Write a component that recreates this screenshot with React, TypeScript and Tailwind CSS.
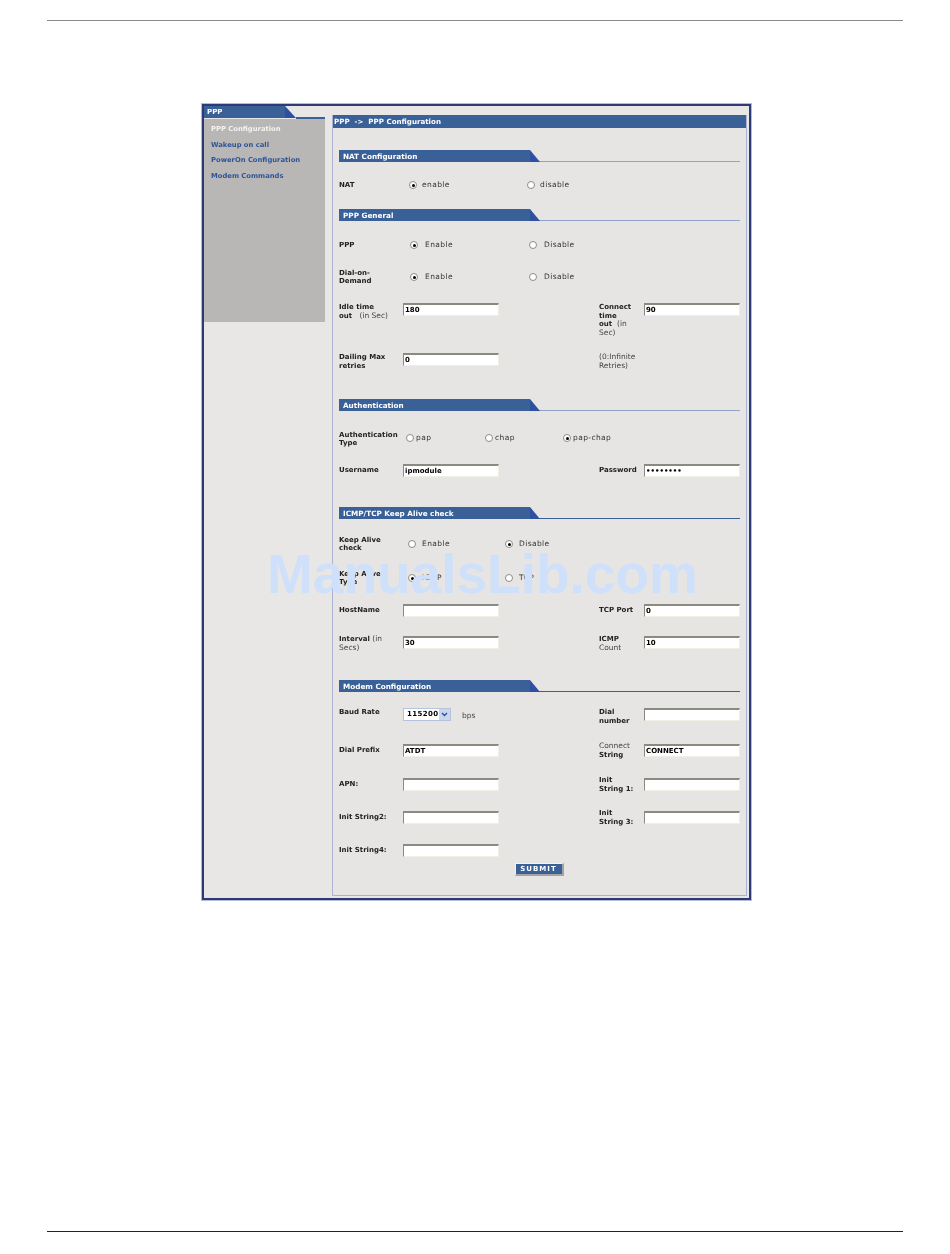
import React from "react";

const Sec = ({ t, mt, dark }: { t: string; mt: string; dark?: boolean }) => (
  <div className={`h-[13px] ${mt}`}>
    <div className={`flex items-start h-[12px] border-b ${dark ? "border-[#3a5f98]" : "border-[#8ea3cb]"}`}>
      <div className="h-[12px] w-[191px] bg-[#3a6098] text-white font-bold pl-[4px] leading-[13px] text-[7.25px]">{t}</div>
      <svg width="10" height="12" viewBox="0 0 10 12" className="block"><polygon points="0,0 0,12 10,12" fill="#2f4fa0" /></svg>
    </div>
  </div>
);

const Radio = ({ on }: { on?: boolean }) => (
  <span className="inline-flex w-[8px] h-[8px] rounded-full bg-white border border-[#8d8c88] items-center justify-center shrink-0">
    {on && <span className="w-[3px] h-[3px] rounded-full bg-black" />}
  </span>
);

const Opt = ({ label, on, gap }: { label: string; on?: boolean; gap: string }) => (
  <div className={`flex items-center ${gap} w-0 whitespace-nowrap`}>
    <Radio on={on} />
    <span className="text-[#333] tracking-[0.4px] text-[7.5px]">{label}</span>
  </div>
);

const Input = ({ v, w = "w-[96px]" }: { v?: string; w?: string }) => (
  <div className={`h-[13px] ${w} bg-white border-t-2 border-l border-[#8b8a80] border-b border-r border-b-[#f0efe6] border-r-[#f0efe6] pl-[1px] leading-[11px] text-black font-bold shrink-0`}>
    {v}
  </div>
);

const Lbl = ({ children, w = "w-[64px]" }: { children: React.ReactNode; w?: string }) => (
  <div className={`${w} shrink-0 leading-[8.5px] font-bold text-[#222]`}>{children}</div>
);
const Thin = ({ children }: { children: React.ReactNode }) => <span className="font-normal text-[#444] text-[7.5px]">{children}</span>;

const Row = ({ h, mt, l, a, rl, b, top }: { h: string; mt: string; l: React.ReactNode; a: React.ReactNode; rl?: React.ReactNode; b?: React.ReactNode; top?: boolean }) => (
  <div className={`flex ${top ? "items-start" : "items-center"} ${h} ${mt}`}>
    <Lbl>{l}</Lbl>
    <div className="w-[196px] shrink-0">{a}</div>
    {rl !== undefined && <Lbl w="w-[45px]">{rl}</Lbl>}
    {b}
  </div>
);

export default function App() {
  return (
    <div className="relative w-[950px] h-[1254px] bg-white overflow-hidden pt-[20px] pl-[47px] font-['DejaVu_Sans',sans-serif] text-[7px]">
      <div className="w-[856px] h-[1px] bg-[#8a8a8a]" />
      <div className="ml-[155px] mt-[83px] w-[549px] h-[796px] border-2 border-[#2c3a78] ring-1 ring-[#b4bad8] bg-[#e8e7e5] flex items-start blur-[0.25px]">
        <aside className="w-[121px] shrink-0">
          <div className="flex h-[13px]">
            <div className="w-[81px] h-[12px] bg-[#3a6098] text-white font-bold pl-[3px] leading-[12px]">PPP</div>
            <svg width="11" height="12" viewBox="0 0 11 12" className="block"><polygon points="0,0 0,12 11,12" fill="#2f4fa0" /></svg>
            <div className="flex-1 border-b-2 border-[#3a6098] h-[13px]" />
          </div>
          <nav className="h-[203px] bg-[#b8b7b5] pl-[7px] pt-[4px] font-bold flex flex-col text-[6.8px]">
            <a className="h-[15.5px] leading-[12px] text-[#f2f2f0]">PPP Configuration</a>
            <a className="h-[15.5px] leading-[12px] text-[#2f5596]">Wakeup on call</a>
            <a className="h-[15.5px] leading-[12px] text-[#2f5596]">PowerOn Configuration</a>
            <a className="h-[15.5px] leading-[12px] text-[#2f5596]">Modem Commands</a>
          </nav>
        </aside>
        <main className="ml-[7px] mt-[9px] w-[415px] h-[781px] border border-[#a9b4d2] border-t-0 bg-[#e6e5e3] flex flex-col">
          <div className="h-[13px] bg-[#3a6098] text-white font-bold pl-[1px] leading-[14px] text-[7.1px] shrink-0">PPP&nbsp; -&gt;&nbsp; PPP Configuration</div>
          <div className="pl-[6px] pr-[6px]">
            <Sec t="NAT Configuration" mt="mt-[22px]" />
            <div className="flex items-center h-[12px] mt-[16px]">
              <Lbl w="w-[70px]">NAT</Lbl>
              <div className="w-[118px] shrink-0"><Opt gap="gap-[5px]" label="enable" on /></div>
              <Opt gap="gap-[5px]" label="disable" />
            </div>
            <Sec t="PPP General" mt="mt-[18px]" />
            <div className="flex items-center h-[12px] mt-[17px]">
              <Lbl w="w-[71px]">PPP</Lbl>
              <div className="w-[119px] shrink-0"><Opt gap="gap-[7px]" label="Enable" on /></div>
              <Opt gap="gap-[7px]" label="Disable" />
            </div>
            <div className="flex items-center h-[18px] mt-[17px]">
              <Lbl w="w-[71px]">Dial-on-<br />Demand</Lbl>
              <div className="w-[119px] shrink-0"><Opt gap="gap-[7px]" label="Enable" on /></div>
              <Opt gap="gap-[7px]" label="Disable" />
            </div>
            <Row top h="h-[36px]" mt="mt-[17px]" l={<>Idle time<br />out &nbsp; <Thin>(in Sec)</Thin></>} a={<Input v="180" />} rl={<>Connect<br />time<br />out &nbsp;<Thin>(in</Thin><br /><Thin>Sec)</Thin></>} b={<Input v="90" />} />
            <Row top h="h-[20px]" mt="mt-[14px]" l={<>Dailing Max<br />retries</>} a={<Input v="0" />} rl={<span className="block w-[50px]"><Thin>(0:Infinite<br />Retries)</Thin></span>} />
            <Sec t="Authentication" mt="mt-[26px]" />
            <div className="flex items-center h-[18px] mt-[18px]">
              <Lbl w="w-[67px]">Authentication<br />Type</Lbl>
              <div className="w-[79px] shrink-0 -mt-[2px]"><Opt gap="gap-[2px]" label="pap" /></div>
              <div className="w-[78px] shrink-0 -mt-[2px]"><Opt gap="gap-[2px]" label="chap" /></div>
              <div className="-mt-[2px]"><Opt gap="gap-[2px]" label="pap-chap" on /></div>
            </div>
            <Row h="h-[13px]" mt="mt-[16px]" l="Username" a={<Input v="ipmodule" />} rl={<span className="whitespace-nowrap">Password</span>} b={<Input v="••••••••" />} />
            <Sec t="ICMP/TCP Keep Alive check" mt="mt-[30px]" dark />
            <div className="flex items-center h-[18px] mt-[15px]">
              <Lbl w="w-[69px]">Keep Alive<br />check</Lbl>
              <div className="w-[97px] shrink-0"><Opt gap="gap-[6px]" label="Enable" /></div>
              <Opt gap="gap-[6px]" label="Disable" on />
            </div>
            <div className="flex items-center h-[18px] mt-[16px]">
              <Lbl w="w-[69px]">Keep Alive<br />Type</Lbl>
              <div className="w-[97px] shrink-0"><Opt gap="gap-[6px]" label="ICMP" on /></div>
              <Opt gap="gap-[6px]" label="TCP" />
            </div>
            <Row h="h-[13px]" mt="mt-[17px]" l="HostName" a={<Input />} rl="TCP Port" b={<Input v="0" />} />
            <Row top h="h-[18px]" mt="mt-[19px]" l={<span className="block -mt-[1px]">Interval <Thin>(in</Thin><br /><Thin>Secs)</Thin></span>} a={<Input v="30" />} rl={<span className="block -mt-[1px]">ICMP<br /><Thin>Count</Thin></span>} b={<Input v="10" />} />
            <Sec t="Modem Configuration" mt="mt-[26px]" dark />
            <Row top h="h-[18px]" mt="mt-[15px]" l="Baud Rate" a={
              <div className="flex items-center">
                <div className="flex items-center w-[48px] h-[13px] bg-white border border-[#b5c3de] shrink-0">
                  <span className="font-bold pl-[3px] w-[35px] text-black leading-[11px] tracking-[0.4px]">115200</span>
                  <span className="w-[11px] h-[11px] bg-[#c9d6ee] flex items-center justify-center">
                    <svg width="7" height="5" viewBox="0 0 7 5"><path d="M1 1l2.5 2.5L6 1" fill="none" stroke="#2f4fa0" strokeWidth="1.4" /></svg>
                  </span>
                </div>
                <span className="ml-[11px] text-[#444] mt-[2px] text-[7.5px]">bps</span>
              </div>
            } rl={<>Dial<br />number</>} b={<Input />} />
            <Row top h="h-[18px]" mt="mt-[18px]" l={<span className="block pt-[2px]">Dial Prefix</span>} a={<Input v="ATDT" />} rl={<span className="block -mt-[2px]"><Thin>Connect</Thin><br />String</span>} b={<Input v="CONNECT" />} />
            <Row top h="h-[18px]" mt="mt-[16px]" l={<span className="block pt-[2px]">APN:</span>} a={<Input />} rl={<span className="block -mt-[2px]">Init<br />String 1:</span>} b={<Input />} />
            <Row top h="h-[18px]" mt="mt-[15px]" l={<span className="block pt-[2px]">Init String2:</span>} a={<Input />} rl={<span className="block -mt-[2px]">Init<br />String 3:</span>} b={<Input />} />
            <Row top h="h-[13px]" mt="mt-[15px]" l={<span className="block pt-[2px]">Init String4:</span>} a={<Input />} />
            <div className="flex justify-center mt-[6px] pr-[1px]">
              <div className="w-[49px] h-[13px] bg-[#3a6098] border-l border-t border-[#f2f2f0] border-r-2 border-b-2 border-r-[#a3a3a3] border-b-[#a3a3a3] text-white font-bold text-center leading-[10px] tracking-[1px]">SUBMIT</div>
            </div>
          </div>
        </main>
      </div>
      <div className="mt-[331px] w-[856px] h-[1px] bg-[#222]" />
      <div className="absolute left-[267px] top-[541px] w-[430px] text-center text-[55px] leading-[66px] font-bold font-['Liberation_Sans',sans-serif] text-[#cfe0fb] whitespace-nowrap">ManualsLib.com</div>
    </div>
  );
}
